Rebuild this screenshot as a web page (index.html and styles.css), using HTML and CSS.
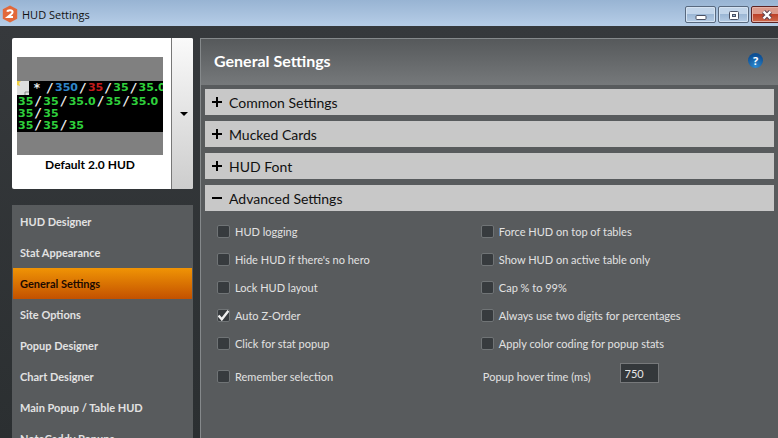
FILE: index.html
```html
<!DOCTYPE html>
<html lang="en">
<head>
  <meta charset="UTF-8" />
  <meta name="viewport" content="width=device-width, initial-scale=1.0" />
  <title>HUD Settings</title>
  <link rel="stylesheet" href="styles.css">
</head>

<body>
  <header class="titlebar">
    <svg class="logo" viewBox="0 0 16 18" aria-hidden="true">
      <path d="M8 0.5 L15.2 4.2 V13.8 L8 17.5 L0.8 13.8 V4.2 Z" fill="#e2683a" />
      <path d="M5.3 6.8 Q5.6 5.2 8 5.2 Q10.6 5.2 10.6 7.1 Q10.6 8.3 8.8 9.6 L5.8 12 H11" fill="none" stroke="#fff" stroke-width="2" />
    </svg>
    <span class="window-title">HUD Settings</span>
    <div class="window-buttons">
      <button class="win-btn" aria-label="Minimize">
        <svg width="12" height="12" viewBox="0 0 12 12"><rect x="1" y="6.5" width="10" height="4" rx="1" fill="#fff" stroke="#4b5163" /></svg>
      </button>
      <button class="win-btn" aria-label="Maximize">
        <svg width="12" height="12" viewBox="0 0 12 12">
          <rect x="1.5" y="2.5" width="9" height="8" rx="1" fill="#fff" stroke="#4b5163" />
          <rect x="4.5" y="5.5" width="3" height="2" fill="#9db8d6" stroke="#4b5163" />
        </svg>
      </button>
      <button class="win-btn close" aria-label="Close">
        <svg width="12" height="12" viewBox="0 0 12 12">
          <path d="M2.5 2.5 L9.5 9.5 M9.5 2.5 L2.5 9.5" stroke="#5a4350" stroke-width="4.4" />
          <path d="M2.5 2.5 L9.5 9.5 M9.5 2.5 L2.5 9.5" stroke="#fff" stroke-width="2.4" />
        </svg>
      </button>
    </div>
  </header>

  <main class="window">
    <aside class="sidebar">
      <button class="hud-picker">
        <span class="hud-choice">
          <span class="hud-preview">
            <span class="hud-screen">
              <span class="hud-line first">
                <svg class="note" width="12" height="14" viewBox="0 0 12 14" aria-hidden="true">
                  <path d="M0 0 H12 V14 H0 Z" fill="#dedede" />
                  <path d="M8 14 V11 H12" fill="none" stroke="#888" />
                  <path d="M0 0 H4 L2 2 L3 5 L0 4 Z" fill="#f0d040" />
                </svg>
                <b class="star">*</b><i>/</i><b class="blue">350</b><i>/</i><b class="red">35</b><i>/</i><b>35</b><i>/</i><b>35.0</b>
              </span>
              <span class="hud-line">35<i>/</i>35<i>/</i>35.0<i>/</i>35<i>/</i>35.0</span>
              <span class="hud-line">35<i>/</i>35</span>
              <span class="hud-line">35<i>/</i>35<i>/</i>35</span>
            </span>
          </span>
          <span class="hud-name">Default 2.0 HUD</span>
        </span>
        <span class="hud-arrow"></span>
      </button>

      <nav class="menu">
        <a href="#">HUD Designer</a>
        <a href="#">Stat Appearance</a>
        <a href="#" class="active">General Settings</a>
        <a href="#">Site Options</a>
        <a href="#">Popup Designer</a>
        <a href="#">Chart Designer</a>
        <a href="#">Main Popup / Table HUD</a>
        <a href="#">NoteCaddy Popups</a>
      </nav>
    </aside>

    <section class="panel">
      <div class="panel-header">
        <h1>General Settings</h1>
        <button class="help" aria-label="Help">?</button>
      </div>

      <div class="accordion">
        <button class="section"><span class="sign plus"></span>Common Settings</button>
        <button class="section"><span class="sign plus"></span>Mucked Cards</button>
        <button class="section"><span class="sign plus"></span>HUD Font</button>
        <button class="section" aria-expanded="true"><span class="sign"></span>Advanced Settings</button>
      </div>

      <form class="options">
        <label class="option"><input type="checkbox">HUD logging</label>
        <label class="option"><input type="checkbox">Force HUD on top of tables</label>
        <label class="option"><input type="checkbox">Hide HUD if there's no hero</label>
        <label class="option"><input type="checkbox">Show HUD on active table only</label>
        <label class="option"><input type="checkbox">Lock HUD layout</label>
        <label class="option"><input type="checkbox">Cap % to 99%</label>
        <label class="option"><input type="checkbox" checked>Auto Z-Order</label>
        <label class="option"><input type="checkbox">Always use two digits for percentages</label>
        <label class="option"><input type="checkbox">Click for stat popup</label>
        <label class="option"><input type="checkbox">Apply color coding for popup stats</label>
        <label class="option last"><input type="checkbox">Remember selection</label>
        <div class="hover-time">
          <label for="hoverTime">Popup hover time (ms)</label>
          <input type="text" id="hoverTime" value="750">
        </div>
      </form>
    </section>
  </main>
</body>
</html>
```
FILE: styles.css
```css
:root {
  --panel: #585b5d;
  --dark: #303437;
  --text: #e2e2e2;
  --ui: Lato, "Open Sans", sans-serif;
}

* {
  box-sizing: border-box;
}

body {
  margin: 0;
  height: 100vh;
  display: flex;
  flex-direction: column;
  overflow: hidden;
  background: var(--dark);
  color: var(--text);
  font-family: var(--ui);
  font-size: 11px;
}

button {
  font: inherit;
  padding: 0;
  border: none;
  cursor: pointer;
}

/* title bar */
.titlebar {
  flex: none;
  display: flex;
  align-items: center;
  height: 26px;
  padding-left: 2px;
  background: linear-gradient(#98b4d3, #b6cde7);
}

.logo {
  width: 16px;
  height: 18px;
  margin-top: 2px;
}

.window-title {
  flex: 1;
  margin: 3px 0 0 4px;
  color: #111;
  font-family: "Open Sans", sans-serif;
}

.window-buttons {
  display: flex;
  gap: 2px;
  margin: 3px -12px 0 0;
}

.win-btn {
  display: flex;
  align-items: center;
  justify-content: center;
  width: 31px;
  height: 17px;
  border: 1px solid #58697f;
  border-radius: 2px;
  background: linear-gradient(#c2d5ea 45%, #9cb7d5 50%, #b5cce5);
  box-shadow: inset 0 0 0 1px #d5e3f2;
}

.win-btn.close {
  width: 39px;
  padding-right: 8px;
  border-color: #5c2323;
  background: linear-gradient(#dc9a8c 45%, #bd4129 50%, #cf6a4c);
  box-shadow: inset 0 0 0 1px #e4b1a6;
}

/* window */
.window {
  flex: 1;
  min-height: 0;
  display: flex;
  gap: 7px;
  padding: 12px 0 0 12px;
  background: linear-gradient(#36393c, #2b2f31);
}

.sidebar {
  width: 181px;
  flex: none;
  display: flex;
  flex-direction: column;
  gap: 16px;
}

.hud-picker {
  flex: none;
  display: flex;
  align-items: stretch;
  height: 151px;
  border-radius: 2px;
  background: #fff;
  overflow: hidden;
}

.hud-choice {
  flex: 1;
  min-width: 0;
  padding: 19px 8px 0 5px;
  border-right: 1px solid #777;
}

.hud-preview {
  display: block;
  padding: 24px 0 23px;
  background: #808080;
}

.hud-screen {
  display: block;
  height: 51px;
  overflow: hidden;
  background: #000;
  color: #2fd03c;
  font: bold 11px/12px "DejaVu Sans", sans-serif;
  text-align: left;
  white-space: nowrap;
}

.hud-line {
  display: block;
  height: 12px;
  padding-left: 1px;
}

.hud-line.first {
  display: flex;
  height: 14px;
  padding-left: 0;
  line-height: 14px;
}

.hud-line.first > * {
  flex: none;
}

.hud-line i {
  display: inline-block;
  width: 10px;
  color: #eee;
  font-size: 12px;
  text-align: center;
}

.hud-line .star {
  width: 16px;
  color: #eee;
  font-size: 12px;
  text-align: center;
}

.hud-line .blue {
  color: #2f86c8;
}

.hud-line .red {
  color: #c41c1c;
}

.hud-name {
  display: block;
  margin-top: 1px;
  color: #000;
  font-weight: bold;
  font-size: 12px;
  line-height: 18px;
  text-align: center;
}

.hud-arrow {
  display: flex;
  align-items: center;
  justify-content: center;
  width: 21px;
  padding-left: 3px;
  background: linear-gradient(#fafafa, #cdcdcd);
}

.hud-arrow::before {
  content: "";
  border: 4px solid transparent;
  border-top-color: #000;
  border-bottom: none;
}

.menu {
  flex: 1;
  padding: 1px;
  background: var(--panel);
}

.menu a {
  display: block;
  height: 31px;
  padding-left: 7px;
  color: var(--text);
  font-weight: bold;
  line-height: 32px;
  text-decoration: none;
}

.menu a.active {
  background: linear-gradient(#f09405, #c35100);
  color: #1c0a00;
}

/* settings panel */
.panel {
  flex: 1;
  min-width: 0;
  border: solid #85898b;
  border-width: 1px 0 0 1px;
  background: var(--panel);
}

.panel-header {
  display: flex;
  align-items: center;
  justify-content: space-between;
  height: 46px;
  padding: 0 15px 4px 13px;
  background: linear-gradient(#56595b, #76797b);
}

.panel-header h1 {
  margin: 0;
  color: #fff;
  font-size: 16px;
}

.help {
  width: 15px;
  height: 15px;
  border-radius: 50%;
  background: radial-gradient(circle at 50% 90%, #2f8ad0, #0d4f94 75%);
  color: #fff;
  font: bold 11px/15px "Open Sans", sans-serif;
}

.accordion {
  display: flex;
  flex-direction: column;
  gap: 6px;
  padding: 4px 4px 0;
}

.section {
  display: flex;
  align-items: center;
  gap: 7px;
  height: 26px;
  padding-left: 7px;
  background: #c8c8c8;
  color: #111;
  font-size: 14px;
}

.sign {
  width: 10px;
  height: 10px;
  background: linear-gradient(#000, #000) center / 10px 2px no-repeat;
}

.sign.plus {
  background: linear-gradient(#000, #000) center / 10px 2px no-repeat,
    linear-gradient(#000, #000) center / 2px 10px no-repeat;
}

.options {
  display: grid;
  grid-template-columns: 9fr 10fr;
  padding: 6px 4px 0 16px;
}

.option {
  display: flex;
  align-items: center;
  gap: 5px;
  height: 28px;
}

.option.last {
  height: 38px;
}

.option input {
  appearance: none;
  width: 13px;
  height: 13px;
  margin: 0;
  border: 1px solid #707476;
  border-radius: 2px;
  background: #373b3e;
}

.option input:checked {
  background: #373b3e url("data:image/svg+xml,%3Csvg xmlns='http://www.w3.org/2000/svg' viewBox='0 0 11 11'%3E%3Cpath d='M0.5 5.5 L3.8 9.3 L10.5 0.8' fill='none' stroke='%23eee' stroke-width='2.4'/%3E%3C/svg%3E") center / 11px no-repeat;
}

.hover-time {
  display: flex;
  align-items: center;
  gap: 29px;
  height: 38px;
  padding-left: 2px;
}

.hover-time input {
  width: 39px;
  height: 20px;
  margin-bottom: 6px;
  padding: 0 4px;
  border: 1px solid #77797b;
  background: #34383b;
  color: #e6e6e6;
  font: 11px var(--ui);
}
```
